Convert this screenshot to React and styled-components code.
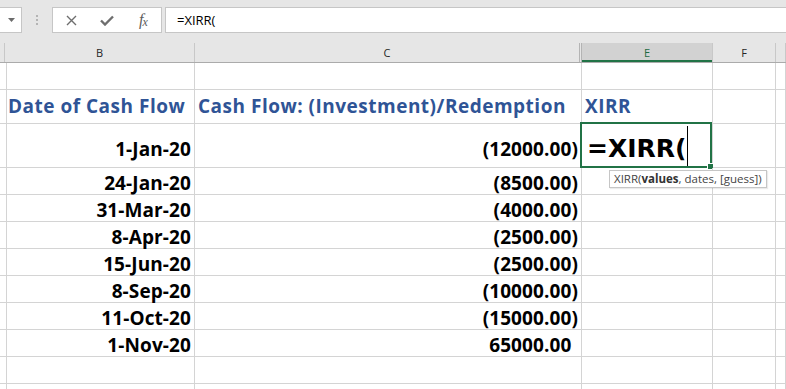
import React from 'react';
import styled, { createGlobalStyle } from 'styled-components';

const GlobalStyle = createGlobalStyle`
  html, body {
    margin: 0;
    padding: 0;
    background: #ffffff;
    overflow: hidden;
  }
  body {
    font-family: 'Open Sans', 'Noto Sans', sans-serif;
  }
`;

const dates = ['1-Jan-20', '24-Jan-20', '31-Mar-20', '8-Apr-20', '15-Jun-20', '8-Sep-20', '11-Oct-20', '1-Nov-20'];
const flows = ['(12000.00)', '(8500.00)', '(4000.00)', '(2500.00)', '(2500.00)', '(10000.00)', '(15000.00)', '65000.00'];

const GRID = '5px 190px 387px 131px 63px 1fr';

function App() {
  return (
    <Page>
      <GlobalStyle />
      <Toolbar>
        <NameBox>
          <svg width="7" height="4" viewBox="0 0 7 4">
            <path d="M0 0 L7 0 L3.5 4 Z" fill="#6b6b6b" />
          </svg>
        </NameBox>
        <Grip>
          <Dot />
          <Dot />
          <Dot />
        </Grip>
        <FnBox>
          <FnSlot>
            <svg width="11" height="11" viewBox="0 0 11 11">
              <path d="M1 1 L10 10 M10 1 L1 10" stroke="#6e6e6e" strokeWidth="1.4" fill="none" />
            </svg>
          </FnSlot>
          <FnSlot>
            <svg width="14" height="11" viewBox="0 0 14 11">
              <path d="M1 5.5 L5 9.5 L13 1.5" stroke="#6e6e6e" strokeWidth="2.4" fill="none" />
            </svg>
          </FnSlot>
          <FnSlot>
            <FxText>
              f<sub>x</sub>
            </FxText>
          </FnSlot>
        </FnBox>
        <FormulaBox>=XIRR(</FormulaBox>
      </Toolbar>

      <HeaderRow>
        <HeadCell />
        <HeadCell>B</HeadCell>
        <HeadCell $hidden>C</HeadCell>
        <HeadCell $active>E</HeadCell>
        <HeadCell>F</HeadCell>
        <HeadCell />
      </HeaderRow>

      <Row $h={27}>
        <Cell />
        <Cell />
        <Cell />
        <Cell />
        <Cell />
        <Cell />
      </Row>

      <Row $h={34}>
        <Cell />
        <Cell $title>Date of Cash Flow</Cell>
        <Cell $title>Cash Flow: (Investment)/Redemption</Cell>
        <Cell $title>XIRR</Cell>
        <Cell />
        <Cell />
      </Row>

      {dates.map((d, i) => {
        const first = i === 0;
        const positive = !flows[i].startsWith('(');
        return (
          <Row key={d} $h={first ? 44 : 27}>
            <Cell />
            <Cell $right $shift={first ? 4 : 2}>{d}</Cell>
            <Cell $right $shift={first ? 4 : 2}>
              {flows[i]}
              {positive && <Pad>)</Pad>}
            </Cell>
            {first ? (
              <EditCell>
                <EditText>=XIRR(</EditText>
                <Caret />
                <Selection>
                  <Handle />
                </Selection>
                <Tooltip>
                  XIRR(<b>values</b>, dates, [guess])
                </Tooltip>
              </EditCell>
            ) : (
              <Cell />
            )}
            <Cell />
            <Cell />
          </Row>
        );
      })}

      <Row $h={27}>
        <Cell />
        <Cell />
        <Cell />
        <Cell />
        <Cell />
        <Cell />
      </Row>
      <Row $h={27}>
        <Cell />
        <Cell />
        <Cell />
        <Cell />
        <Cell />
        <Cell />
      </Row>
    </Page>
  );
}

const Page = styled.div`
  width: 786px;
  height: 389px;
  overflow: hidden;
  background: #ffffff;
`;

const Toolbar = styled.div`
  display: flex;
  align-items: flex-start;
  height: 43px;
  padding-top: 7px;
  box-sizing: border-box;
  background: #e6e6e6;
`;

const NameBox = styled.div`
  width: 22px;
  height: 26px;
  box-sizing: border-box;
  background: #ffffff;
  border: 1px solid #c6c6c6;
  border-left: none;
  display: flex;
  align-items: center;
  justify-content: flex-end;
  padding-right: 6px;
`;

const Grip = styled.div`
  width: 30px;
  height: 26px;
  display: flex;
  flex-direction: column;
  align-items: center;
  justify-content: center;
  gap: 2px;
`;

const Dot = styled.span`
  width: 2px;
  height: 2px;
  background: #b4b4b4;
`;

const FnBox = styled.div`
  width: 110px;
  height: 26px;
  box-sizing: border-box;
  background: #ffffff;
  border: 1px solid #c6c6c6;
  display: flex;
`;

const FnSlot = styled.div`
  flex: 1;
  display: flex;
  align-items: center;
  justify-content: center;
`;

const FxText = styled.span`
  font-family: 'Liberation Serif', serif;
  font-style: italic;
  font-size: 16px;
  color: #5e5e5e;
  line-height: 1;
  letter-spacing: -1px;

  & sub {
    font-size: 12px;
    vertical-align: baseline;
    position: relative;
    top: 1px;
  }
`;

const FormulaBox = styled.div`
  flex: 1;
  margin-left: 3px;
  height: 26px;
  box-sizing: border-box;
  background: #ffffff;
  border: 1px solid #c6c6c6;
  border-right: none;
  padding-left: 11px;
  font-size: 13px;
  line-height: 24px;
  color: #000000;
`;

const HeaderRow = styled.div`
  display: grid;
  grid-template-columns: ${GRID};
  height: 20px;
  background: #e6e6e6;
  border-bottom: 1px solid #ababab;
  box-sizing: border-box;
`;

const HeadCell = styled.div`
  box-sizing: border-box;
  border-right: ${p => (p.$hidden ? '3px double #b4b4b4' : '1px solid #c8c8c8')};
  background: ${p => (p.$active ? '#d2d2d2' : 'transparent')};
  box-shadow: ${p => (p.$active ? 'inset 0 -2px 0 #217346' : 'none')};
  color: ${p => (p.$active ? '#1e6b41' : '#262626')};
  font-size: 11px;
  display: flex;
  align-items: center;
  justify-content: center;
`;

const Row = styled.div`
  display: grid;
  grid-template-columns: ${GRID};
  height: ${p => p.$h}px;
`;

const Cell = styled.div`
  position: relative;
  box-sizing: border-box;
  border-right: 1px solid #d4d4d4;
  border-bottom: 1px solid #d4d4d4;
  display: flex;
  align-items: center;
  justify-content: ${p => (p.$right ? 'flex-end' : 'flex-start')};
  padding: 0 3px;
  padding-top: ${p => (p.$shift ? p.$shift * 2 : 0)}px;
  white-space: nowrap;
  font-weight: 700;
  font-size: 19px;
  letter-spacing: ${p => (p.$title ? '0.5px' : '0.1px')};
  color: ${p => (p.$title ? '#2f5496' : '#000000')};
  line-height: 1;
`;

const Pad = styled.span`
  visibility: hidden;
`;

const EditCell = styled(Cell)`
  padding-left: 5px;
  padding-top: 0;
  overflow: visible;
`;

const EditText = styled.span`
  font-family: 'DejaVu Sans', sans-serif;
  font-size: 25px;
  font-weight: 700;
  letter-spacing: 0;
  color: #000000;
  padding-top: 6px;
`;

const Caret = styled.span`
  width: 1px;
  height: 40px;
  background: #000000;
  margin-left: 1px;
`;

const Selection = styled.div`
  position: absolute;
  left: -2px;
  top: -2px;
  right: 0;
  bottom: -1px;
  border: 2px solid #217346;
  pointer-events: none;
`;

const Handle = styled.span`
  position: absolute;
  right: -4px;
  bottom: -4px;
  width: 5px;
  height: 5px;
  background: #217346;
  border: 1px solid #ffffff;
`;

const Tooltip = styled.div`
  position: absolute;
  left: 27px;
  top: 46px;
  z-index: 2;
  height: 18px;
  box-sizing: border-box;
  padding: 0 4px;
  background: #ffffff;
  border: 1px solid #c6c6c6;
  box-shadow: 1px 1px 1px rgba(0, 0, 0, 0.08);
  font-family: 'Open Sans', sans-serif;
  font-size: 11.5px;
  font-weight: 400;
  letter-spacing: 0;
  line-height: 16px;
  color: #444444;

  & b {
    font-weight: 700;
    color: #333333;
  }
`;

export default App;
